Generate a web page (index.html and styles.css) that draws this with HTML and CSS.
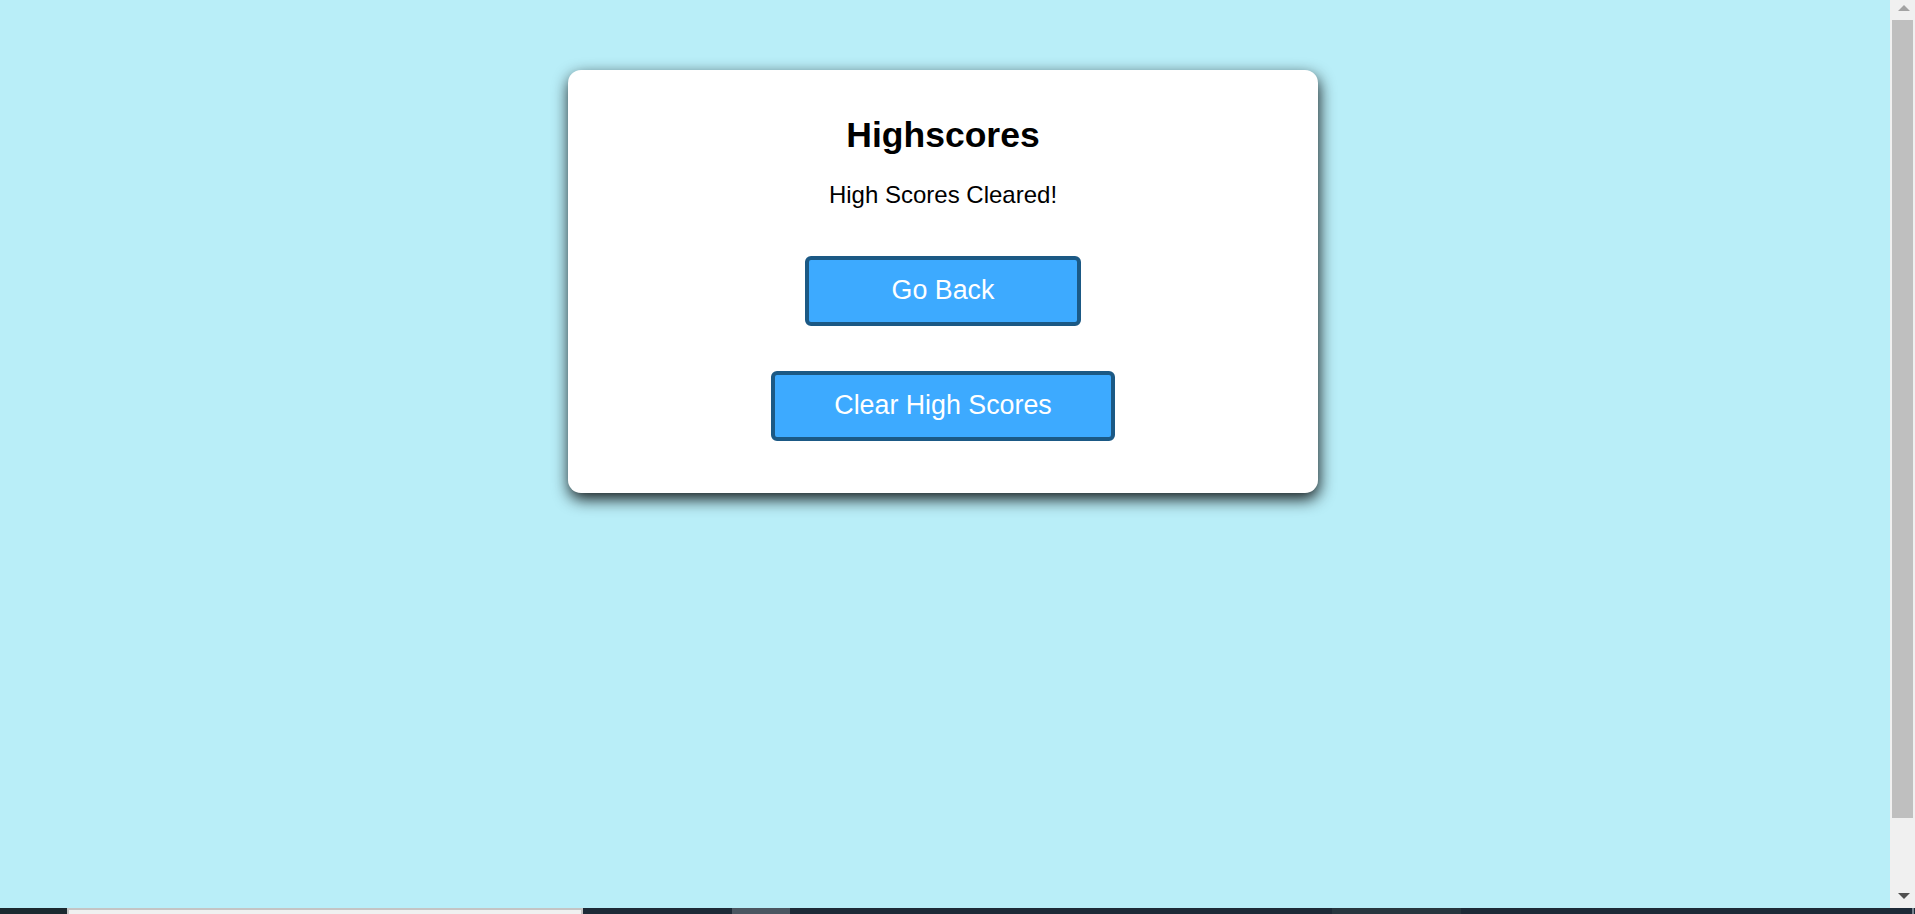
FILE: index.html
```html
<!DOCTYPE html>
<html lang="en">
<head>
<meta charset="utf-8">
<title>Highscores</title>
<link rel="stylesheet" href="styles.css">
</head>
<body>
<div class="screen">
  <div class="viewport">
    <main class="page">
      <section class="card">
        <h1 class="title">Highscores</h1>
        <p class="message">High Scores Cleared!</p>
        <button class="btn btn-back" type="button">Go Back</button>
        <button class="btn btn-clear" type="button">Clear High Scores</button>
      </section>
    </main>
    <div class="scrollbar">
      <div class="sb-up"><span class="tri-up"></span></div>
      <div class="sb-thumb"></div>
      <div class="sb-down"><span class="tri-down"></span></div>
    </div>
  </div>
  <div class="taskbar">
    <div class="tb-start"></div>
    <div class="tb-search"></div>
    <div class="tb-gap1"></div>
    <div class="tb-app"></div>
    <div class="tb-gap2"></div>
    <div class="tb-app2"></div>
    <div class="tb-gap3"></div>
    <div class="tb-end"></div>
  </div>
</div>
</body>
</html>
```

FILE: styles.css
```css
html, body {
  margin: 0;
  padding: 0;
  overflow: hidden;
}

body {
  font-family: "Liberation Sans", Arial, sans-serif;
}

.screen {
  width: 1915px;
  height: 914px;
  display: flex;
  flex-direction: column;
}

.viewport {
  height: 908px;
  display: flex;
}

.page {
  flex: 1;
  background: #b9eef8;
  display: flex;
  justify-content: center;
  align-items: flex-start;
  padding-top: 70px;
  padding-right: 4px;
}

.card {
  width: 750px;
  height: 423px;
  box-sizing: border-box;
  background: #ffffff;
  border-radius: 13px;
  box-shadow: 1px 6px 16px rgba(0, 0, 0, 0.9);
  padding-top: 45px;
  display: flex;
  flex-direction: column;
  align-items: center;
}

.title {
  margin: 0;
  font-size: 35.5px;
  line-height: 41px;
  font-weight: bold;
  color: #000;
}

.message {
  margin: 26px 0 0;
  font-size: 24px;
  line-height: 26px;
  color: #000;
}

.btn {
  font-family: "Liberation Sans", Arial, sans-serif;
  font-size: 26.8px;
  line-height: 31px;
  color: #ffffff;
  background: #3daaff;
  border: 4px solid #1b5985;
  border-radius: 6px;
  height: 70px;
  padding: 0 0 2px;
  box-sizing: border-box;
  display: flex;
  align-items: center;
  justify-content: center;
}

.btn-back {
  width: 276px;
  margin-top: 48px;
}

.btn-clear {
  width: 344px;
  margin-top: 45px;
}

.scrollbar {
  width: 25px;
  background: #f0f0f0;
  display: flex;
  flex-direction: column;
}

.sb-up {
  height: 20px;
  box-sizing: border-box;
  padding: 5px 0 0 2px;
  display: flex;
  justify-content: center;
  align-items: flex-start;
}

.sb-thumb {
  height: 798px;
  margin: 0 2px;
  background: #bfbfbf;
}

.sb-down {
  flex: 1;
  box-sizing: border-box;
  padding: 75px 0 0 2px;
  display: flex;
  justify-content: center;
  align-items: flex-start;
}

.tri-up {
  width: 0;
  height: 0;
  border-left: 6px solid transparent;
  border-right: 6px solid transparent;
  border-bottom: 6px solid #a3a3a3;
}

.tri-down {
  width: 0;
  height: 0;
  border-left: 6px solid transparent;
  border-right: 6px solid transparent;
  border-top: 6px solid #505050;
}

.taskbar {
  height: 6px;
  display: flex;
  background: #1d2a37;
}

.tb-start {
  width: 67px;
  background: #1b2930;
}

.tb-search {
  width: 512px;
  background: #f0f0f0;
  border-top: 2px solid #c4c4c4;
  border-left: 2px solid #c4c4c4;
  border-right: 2px solid #c4c4c4;
}

.tb-gap1 {
  width: 149px;
}

.tb-app {
  width: 58px;
  background: #4b5661;
}

.tb-gap2 {
  width: 542px;
}

.tb-app2 {
  width: 129px;
  background: #27363f;
}

.tb-gap3 {
  flex: 1;
}

.tb-end {
  width: 2px;
  margin-right: 1px;
  background: #7a8590;
}
```
